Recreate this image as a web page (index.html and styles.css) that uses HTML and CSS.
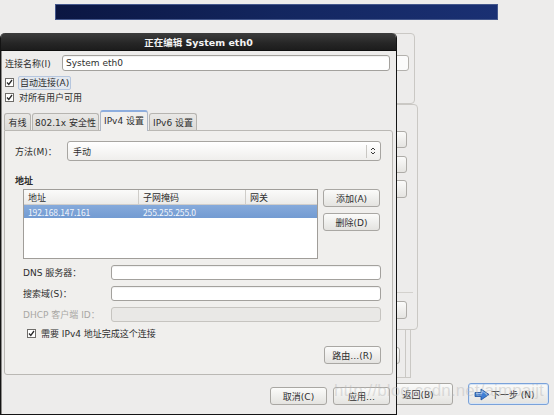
FILE: index.html
```html
<!DOCTYPE html>
<html>
<head>
<meta charset="utf-8">
<link rel="stylesheet" href="styles.css">
</head>
<body>
<div class="banner"></div>
<div class="installer">
  <div class="panel p1"><div class="ghost-input"></div></div>
  <div class="panel p2">
    <div class="ghost-btn g1"></div>
    <div class="ghost-btn g2"></div>
    <div class="ghost-btn g3"></div>
    <div class="ghost-line"></div>
    <div class="ghost-btn g4"></div>
  </div>
  <div class="p3"><div class="p3-inner"><div class="ghost-btn g5"></div></div></div>
</div>
<div class="nav">
  <div class="btn back">返回(B)</div>
  <div class="btn next">
    <svg class="next-icon" width="16" height="13" viewBox="0 0 16 13"><path d="M1 4.5h6V1l8 5.5-8 5.5V8.5H1z" fill="#3f7fd6" stroke="#1f4f9a" stroke-width="0.8"/><path d="M2 5.5h6V3l5 3.5" fill="none" stroke="#a9cdf5" stroke-width="0.8"/></svg>
    <span>下一步 (N)</span>
  </div>
</div>

<div class="dialog">
  <div class="titlebar">正在编辑 System eth0</div>
  <div class="dbody">
    <div class="name-row">
      <span class="name-label">连接名称(I)</span>
      <div class="input">System eth0</div>
    </div>
    <div class="check-row">
      <span class="cb"><svg width="7" height="7" viewBox="0 0 7 7"><path d="M1 3.5l1.8 2L6 1" fill="none" stroke="#2b2b2b" stroke-width="1.3"/></svg></span>
      <span class="focus">自动连接(A)</span>
    </div>
    <div class="check-row">
      <span class="cb"><svg width="7" height="7" viewBox="0 0 7 7"><path d="M1 3.5l1.8 2L6 1" fill="none" stroke="#2b2b2b" stroke-width="1.3"/></svg></span>
      <span class="cb-text">对所有用户可用</span>
    </div>
    <div class="tabs">
      <div class="tab t1">有线</div>
      <div class="tab t2">802.1x 安全性</div>
      <div class="tab t3 active">IPv4 设置</div>
      <div class="tab t4">IPv6 设置</div>
    </div>
    <div class="tabpanel">
      <div class="method-row">
        <span class="method-label">方法(M)：</span>
        <div class="combo">
          <span class="combo-text">手动</span>
          <span class="combo-sep"></span>
          <svg class="combo-arrows" width="6" height="10" viewBox="0 0 6 10"><path d="M1 4L3 2L5 4M1 6L3 8L5 6" fill="none" stroke="#3a3a3a" stroke-width="1"/></svg>
        </div>
      </div>
      <div class="section">地址</div>
      <div class="addr">
        <div class="table">
          <div class="thead">
            <div class="c1">地址</div>
            <div class="c2">子网掩码</div>
            <div class="c3">网关</div>
          </div>
          <div class="trow sel">
            <div class="c1">192.168.147.161</div>
            <div class="c2">255.255.255.0</div>
            <div class="c3"></div>
          </div>
        </div>
        <div class="side-btns">
          <div class="btn sbtn">添加(A)</div>
          <div class="btn sbtn">删除(D)</div>
        </div>
      </div>
      <div class="field">
        <span class="field-label">DNS 服务器：</span>
        <div class="input short"></div>
      </div>
      <div class="field">
        <span class="field-label">搜索域(S)：</span>
        <div class="input short"></div>
      </div>
      <div class="field disabled">
        <span class="field-label">DHCP 客户端 ID：</span>
        <div class="input short off"></div>
      </div>
      <div class="check-row req">
        <span class="cb"><svg width="7" height="7" viewBox="0 0 7 7"><path d="M1 3.5l1.8 2L6 1" fill="none" stroke="#2b2b2b" stroke-width="1.3"/></svg></span>
        <span class="cb-text">需要 IPv4 地址完成这个连接</span>
      </div>
      <div class="route-row">
        <div class="btn sbtn">路由…(R)</div>
      </div>
    </div>
    <div class="dlg-btns">
      <div class="btn dbtn">取消(C)</div>
      <div class="btn dbtn">应用…</div>
    </div>
  </div>
</div>
<div class="watermark">http://blog.csdn.net/aimpaijt</div>
</body>
</html>
```

FILE: styles.css
```css
* { box-sizing: border-box; margin: 0; padding: 0; }
html, body { width: 554px; height: 415px; overflow: hidden; }
body {
  background: #edeceb;
  font-family: "DejaVu Sans", "Noto Sans CJK SC", sans-serif;
  font-size: 9px;
  color: #2e2e2e;
  position: relative;
}

/* background installer */
.banner {
  margin: 4px 0 0 55px;
  width: 443px;
  height: 16px;
  background: linear-gradient(90deg, #0b1642 0%, #13265f 50%, #1a3073 100%);
  border: 1px solid #44578c;
}
.installer {
  margin: 13px 0 0 300px;
  display: flex;
  flex-direction: column;
  align-items: flex-start;
}
.panel {
  border: 1px solid #cac8c4;
  border-radius: 4px;
  display: flex;
  flex-direction: column;
  align-items: flex-end;
}
.p1 { width: 115px; height: 71px; padding: 21px 5px 0 0; }
.ghost-input {
  width: 60px; height: 16px;
  border: 1px solid #b3b1ad; border-radius: 3px;
  background: #fbfbfb;
}
.p2 { width: 118px; height: 226px; padding: 26px 10px 0 0; }
.ghost-btn {
  width: 60px;
  border: 1px solid #aeaca8; border-radius: 3px;
  background: linear-gradient(#fbfbfa, #e5e4e1);
}
.g1 { height: 17px; }
.g2 { height: 17px; margin-top: 8px; }
.g3 { height: 18px; margin-top: 7px; }
.ghost-line { width: 80px; height: 1px; background: #d3d1cd; margin: 94px -6px 0 0; }
.g4 { height: 18px; margin-top: 8px; }
.p3 {
  width: 111px; height: 48px;
  border-right: 1px solid #cac8c4;
  border-bottom: 1px solid #cac8c4;
  padding-right: 4px;
}
.p3-inner {
  height: 100%;
  border-right: 1px solid #cac8c4;
  display: flex; flex-direction: column; align-items: flex-end;
  padding: 17px 5px 0 0;
}
.g5 { height: 17px; }

.nav {
  display: flex;
  margin: 5px 0 0 383px;
  gap: 15px;
}
.btn {
  display: flex; align-items: center; justify-content: center;
  border: 1px solid #a9a7a3; border-radius: 3px;
  background: linear-gradient(#fbfbfa, #e4e3e0);
  color: #2e2e2e;
  white-space: nowrap;
}
.back { width: 70px; height: 22px; }
.next {
  width: 81px; height: 22px;
  border-color: #7aa2da;
  box-shadow: inset 0 0 0 1px #d6e4f5;
  justify-content: flex-start;
  gap: 1px;
  padding-left: 5px;
}
.next-icon { margin-top: 1px; }

/* dialog window */
.dialog {
  position: absolute;
  left: 0; top: 33px;
  width: 397px; height: 382px;
  border: 1px solid #141414;
  border-top: none;
  border-radius: 5px 5px 0 0;
  background: #edeceb;
  box-shadow: inset 1px 0 0 #8c8b89;
  overflow: hidden;
}
.titlebar {
  height: 18px;
  background: linear-gradient(#3d3d3d, #262626 60%, #1c1c1c);
  border-radius: 4px 4px 0 0;
  color: #f4f4f4;
  font-weight: bold;
  font-size: 9.5px;
  display: flex; align-items: center; justify-content: center;
  padding-top: 1px;
  border-bottom: 1px solid #0e0e0e;
}
.dbody { padding: 0 6px 0 3px; }
.name-row {
  display: flex; align-items: center;
  margin-top: 4px;
  padding-left: 1px;
  height: 16px;
}
.name-label { width: 57px; }
.input {
  flex: 1;
  height: 16px;
  border: 1px solid #a3a19d; border-radius: 3px;
  background: #fff;
  padding-left: 3px;
  display: flex; align-items: center;
  box-shadow: inset 0 1px 1px rgba(0,0,0,0.06);
}
.check-row {
  display: flex; align-items: center;
  height: 15px;
  padding-left: 1px;
}
.name-row + .check-row { margin-top: 4px; }
.cb {
  width: 9px; height: 9px;
  border: 1px solid #6e6c69;
  background: #fff;
  display: flex; align-items: center; justify-content: center;
  margin-right: 5px;
}
.focus {
  border: 1px solid #b6c6de;
  background: #e3e8ef;
  border-radius: 2px;
  padding: 0 1px;
  height: 14px;
  display: flex; align-items: center;
  margin-left: -1px;
}
.tabs {
  display: flex; align-items: flex-end;
  margin: 5px 0 0 0;
  height: 20px;
  gap: 1px;
  position: relative;
  z-index: 1;
}
.tab {
  height: 17px;
  border: 1px solid #b6b4b0;
  border-bottom: none;
  border-radius: 3px 3px 0 0;
  background: linear-gradient(#e9e8e6, #dcdbd8);
  display: flex; align-items: center; justify-content: center;
  white-space: nowrap;
}
.t1 { width: 27px; }
.t2 { width: 67px; }
.t3 { width: 48px; }
.t4 { width: 48px; }
.tab.active {
  height: 21px;
  margin-bottom: -1px;
  background: #f0efed;
  border-color: #aeb8c8;
  border-top: 2px solid #8eaede;
  padding-bottom: 2px;
}
.tabpanel {
  width: 389px;
  height: 245px;
  border: 1px solid #bab8b4;
  border-radius: 0 3px 3px 3px;
  background: #f0efed;
  padding: 10px 11px 0 10px;
}
.method-row { display: flex; align-items: center; height: 20px; }
.method-label { width: 52px; }
.combo {
  flex: 1; height: 20px;
  border: 1px solid #a7a5a1; border-radius: 3px;
  background: linear-gradient(#ffffff, #efeeec);
  display: flex; align-items: center;
  padding: 0 4px 0 5px;
}
.combo-text { flex: 1; }
.combo-sep { width: 1px; height: 13px; background: #c9c7c3; margin-right: 3px; }
.section {
  font-weight: bold;
  margin-top: 12px;
  height: 14px;
  display: flex; align-items: center;
}
.addr {
  display: flex;
  margin: 2px 0 0 8px;
  gap: 5px;
}
.table {
  width: 295px; height: 70px;
  border: 1px solid #a09d99;
  background: #fff;
}
.thead, .trow { display: flex; }
.thead {
  height: 15px;
  background: linear-gradient(#fbfbfa, #ecebe9);
  border-bottom: 1px solid #d0cecb;
}
.thead > div { display: flex; align-items: center; padding-left: 4px; }
.thead .c1, .thead .c2 { border-right: 1px solid #cfcdc9; }
.c1 { width: 115px; }
.c2 { width: 107px; }
.c3 { flex: 1; }
.trow { height: 13px; }
.trow > div { display: flex; align-items: center; padding-left: 4px; }
.sel {
  background: linear-gradient(#86aadb, #729bd2);
  color: #f3f6fb;
  font-family: "Noto Sans CJK SC", sans-serif;
  font-size: 8.5px;
  letter-spacing: -0.1px;
}
.side-btns { display: flex; flex-direction: column; gap: 6px; }
.sbtn { width: 57px; height: 18px; }
.field {
  display: flex; align-items: center;
  height: 15px;
  margin-top: 6px;
  padding-left: 8px;
}
.field-label { width: 88px; }
.input.short { height: 15px; }
.input.off { background: #e9e8e6; border-color: #c6c4c0; box-shadow: none; }
.disabled { color: #a9a7a4; }
.req { margin-top: 4px; padding-left: 12px; height: 14px; }
.route-row { display: flex; justify-content: flex-end; margin-top: 6px; }
.dlg-btns {
  display: flex; justify-content: flex-end;
  gap: 6px;
  margin-top: 12px;
}
.dbtn { width: 57px; height: 18px; }

.watermark {
  position: absolute;
  left: 334px; top: 381px;
  font-family: "Liberation Sans", sans-serif;
  font-size: 17px;
  color: rgba(185, 185, 185, 0.45);
  white-space: nowrap;
  letter-spacing: 0.1px;
}
```
